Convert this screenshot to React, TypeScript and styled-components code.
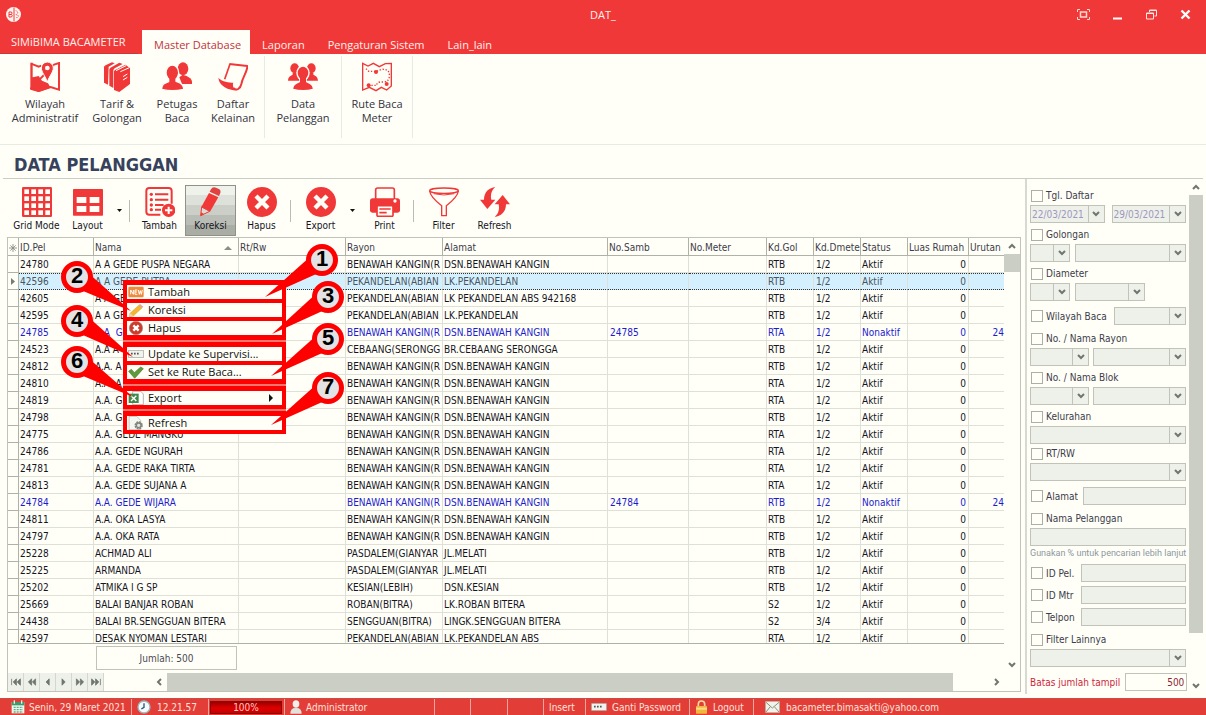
import React from "react";
import styled, { createGlobalStyle, css } from "styled-components";

const RED = "#f13838";
const PAPER = "#fffff8";
const FIELD = "#eef1ea";
const LINE = "#bfc3b8";
const TAHOMA = '"DejaVu Sans Condensed", "DejaVu Sans", sans-serif';
const SEGOE = '"Open Sans", "Noto Sans", sans-serif';

const GlobalStyle = createGlobalStyle`
  * { box-sizing: border-box; }
  body { margin: 0; background: ${PAPER}; font-family: ${TAHOMA}; font-size: 10px; color: #15151f; }
  button, input, select { font: inherit; color: inherit; }
  button { border: 0; padding: 0; background: none; cursor: pointer; }
  svg { display: block; flex: none; }
`;

const Window = styled.div`
  display: flex;
  flex-direction: column;
  height: 100vh;
  overflow: hidden;
`;

/* ---------- title bar and tabs ---------- */

const Header = styled.header`
  background: ${RED};
  color: #fff1ec;
  font-family: ${SEGOE};
  font-size: 11px;
`;

const TitleBar = styled.div`
  display: grid;
  grid-template-columns: 1fr auto 1fr;
  align-items: center;
  height: 30px;
  padding: 0 14px 2px 6px;
`;

const WindowButtons = styled.div`
  display: flex;
  justify-content: flex-end;
  gap: 21px;
`;

const TitleText = styled.span`
  padding-left: 8px;
`;

const Tabs = styled.nav`
  display: flex;
  align-items: stretch;
  height: 24px;
`;

const Brand = styled.button`
  width: 138px;
  margin-right: 4px;
  padding-left: 11px;
  text-align: left;
  border-bottom: 1px solid #c93a36;
`;

const Tab = styled.button<{ $active?: boolean }>`
  padding: 4px 9px 0 12px;
  margin-right: ${(p) => (p.$active ? 0 : 2)}px;
  ${(p) =>
    p.$active &&
    css`
      background: ${PAPER};
      color: #c0343c;
    `}
`;

/* ---------- ribbon ---------- */

const Ribbon = styled.div`
  display: flex;
  height: 91px;
  padding: 2px 8px 6px;
  border-bottom: 1px solid #e6ebe3;
  font-family: ${SEGOE};
  font-size: 11px;
  flex: none;
`;

const RibbonGroup = styled.div`
  display: flex;
  align-items: flex-start;
  border-right: 1px solid #e6ebe3;
`;

const RibbonButton = styled.button<{ $width: number }>`
  display: flex;
  flex-direction: column;
  align-items: center;
  gap: 5px;
  width: ${(p) => p.$width}px;
  padding-top: 6px;
  line-height: 14px;
  color: #33333f;
  white-space: pre-line;
`;

const PageTitle = styled.h1`
  flex: none;
  margin: 0 3px;
  padding: 9px 11px 0;
  height: 34px;
  border-bottom: 1px solid #c9cdc3;
  font-size: 18px;
  line-height: 22px;
  color: #36425c;
`;

/* ---------- main area ---------- */

const Main = styled.main`
  flex: 1;
  min-height: 0;
  display: flex;
`;

const Work = styled.section`
  flex: 1;
  min-width: 0;
  display: flex;
  flex-direction: column;
  padding: 0 4px 6px 7px;
`;

const Toolbar = styled.div`
  display: flex;
  align-items: flex-start;
  padding: 6px 0 1px 4px;
  flex: none;
`;

const Tool = styled.button<{ $on?: boolean }>`
  display: flex;
  flex-direction: column;
  align-items: center;
  gap: 3px;
  width: 51px;
  height: 51px;
  padding-top: 2px;
  line-height: 12px;
  white-space: nowrap;
  ${(p) =>
    p.$on &&
    css`
      background: linear-gradient(#eff1eb 0 19%, #dee1da 19% 39%, #cbcfc7 39% 59%, #b9bdb5 59% 79%, #a9ada4 79%);
      box-shadow: inset 0 0 0 1px #8e938a;
    `}
`;

const ToolDrop = styled.button`
  width: 13px;
  height: 51px;
  display: grid;
  place-items: center;
`;

const ToolRule = styled.span`
  width: 1px;
  height: 22px;
  margin: 15px 4px 0 3px;
  background: #b9beb3;
`;

const Grid = styled.div`
  position: relative;
  flex: 1;
  min-height: 0;
  display: flex;
  flex-direction: column;
  border: 1px solid ${LINE};
`;

const GridTop = styled.div`
  flex: 1;
  min-height: 0;
  display: flex;
`;

const GridView = styled.div`
  flex: 1;
  min-width: 0;
  display: flex;
  flex-direction: column;
`;

const TableClip = styled.div`
  flex: 1;
  min-height: 0;
  overflow: hidden;
  border-bottom: 1px solid #aeb3a8;
`;

const Table = styled.table`
  table-layout: fixed;
  width: 100%;
  border-collapse: separate;
  border-spacing: 0;
`;

const Th = styled.th`
  height: 18px;
  padding: 2px 1px 0;
  border-right: 1px solid #aeb3a8;
  border-bottom: 1px solid #aeb3a8;
  font-weight: 400;
  line-height: 15px;
  text-align: left;
  white-space: nowrap;
  overflow: hidden;
  color: #3c3c4a;
  &:last-child { border-right: 0; }
`;

const HeadFlex = styled.span`
  display: flex;
  justify-content: space-between;
  align-items: center;
  padding-right: 5px;
`;

const Td = styled.td<{ $align?: "right"; $pad?: number }>`
  height: 17px;
  padding: 2px 2px 0 ${(p) => p.$pad ?? 1}px;
  border-right: 1px solid #dde1d8;
  border-bottom: 1px solid #dde1d8;
  line-height: 14px;
  text-align: ${(p) => p.$align ?? "left"};
  white-space: pre;
  overflow: hidden;
  &:first-child { padding: 0 0 0 3px; border-color: #aeb3a8; background: ${PAPER}; }
  &:nth-child(5) { padding-right: 0; }
  &:last-child { border-right: 0; padding-right: 0; }
`;

const Tr = styled.tr<{ $tone?: "selected" | "inactive" }>`
  ${(p) => p.$tone === "inactive" && css`color: #1c1ccf;`}
  ${(p) =>
    p.$tone === "selected" &&
    css`
      color: #4a545c;
      background: #d4f0fe;
      ${Td}:not(:first-child) {
        padding-top: 1px;
        border-top: 1px dotted #333;
        border-bottom: 1px dotted #333;
      }
    `}
`;

const Footer = styled.div`
  height: 29px;
  padding: 2px 0 3px 88px;
`;

const Sum = styled.div`
  width: 141px;
  height: 24px;
  border: 1px solid ${LINE};
  line-height: 23px;
  text-align: center;
  color: #4a4a55;
`;

const VScroll = styled.div`
  width: 16px;
  display: flex;
  flex-direction: column;
  align-items: center;
`;

const Arrow = styled.button`
  flex: none;
  width: 16px;
  height: 16px;
  display: grid;
  place-items: center;
`;

const Thumb = styled.div<{ $size: string }>`
  flex: 0 0 ${(p) => p.$size};
  align-self: stretch;
  background: #cacec5;
`;

const Spacer = styled.span`
  flex: 1;
`;

const Pager = styled.div`
  display: flex;
  align-items: center;
  height: 18px;
  flex: none;
`;

const PageButton = styled.button`
  width: 16px;
  height: 18px;
  display: grid;
  place-items: center;
  background: ${FIELD};
  border-right: 1px solid #d3d7cd;
`;

const HTrack = styled.div`
  flex: 1;
  display: flex;
  align-items: center;
  align-self: stretch;
  padding: 0 15px 0 47px;
`;

/* ---------- context menu and its numbered callouts ---------- */

const Menu = styled.div`
  position: absolute;
  left: 115px;
  top: 42px;
  width: 163px;
  display: flex;
  flex-direction: column;
  gap: 2px;
  background: #f4776f;
  font-family: ${SEGOE};
  font-size: 11px;
`;

const MenuGroup = styled.div<{ $thin?: boolean }>`
  display: flex;
  flex-direction: column;
  gap: 4px;
  background: #fe0000;
  padding: 5px 4px ${(p) => (p.$thin ? 4 : 5)}px;
`;

const MenuItem = styled.button`
  display: flex;
  align-items: center;
  gap: 4px;
  height: 14px;
  padding: 0 9px 0 1px;
  background: ${PAPER};
  color: #111;
  line-height: 14px;
  text-align: left;
`;

const Callouts = styled.svg`
  position: absolute;
  left: 52px;
  top: 2px;
  pointer-events: none;
`;

/* ---------- filter panel ---------- */

const Filters = styled.aside`
  width: 181px;
  flex: none;
  display: flex;
  margin-bottom: 4px;
  border-left: 2px solid #d6dad0;
`;

const FilterForm = styled.form`
  flex: 1;
  min-width: 0;
  padding: 7px 2px 0 3px;
  color: #3c3c4a;
`;

const FilterBlock = styled.div<{ $top?: number }>`
  margin-top: ${(p) => p.$top ?? 0}px;
`;

const FieldRow = styled.div<{ $gap?: number }>`
  display: flex;
  gap: ${(p) => p.$gap ?? 5}px;
  height: 18px;
  align-items: center;
`;

const CheckLabel = styled.label`
  display: flex;
  align-items: center;
  gap: 3px;
  height: 19px;
  padding-left: 1px;
  white-space: nowrap;
  overflow: hidden;
`;

const Check = styled.input.attrs({ type: "checkbox" })`
  appearance: none;
  flex: none;
  width: 12px;
  height: 12px;
  margin: 0;
  border: 1px solid #aab0a3;
  background: ${PAPER};
`;

const SelectBox = styled.span<{ $width?: number }>`
  position: relative;
  display: flex;
  height: 18px;
  ${(p) => (p.$width ? `width: ${p.$width}px; flex: none;` : "flex: 1; min-width: 0;")}
  border: 1px solid ${LINE};
  background: ${FIELD};
`;

const Select = styled.select`
  appearance: none;
  width: 100%;
  border: 0;
  padding: 0 0 0 1px;
  background: none;
  color: #a097bd;
  outline: 0;
`;

const SelectArrow = styled.span`
  position: absolute;
  right: 0;
  top: 0;
  bottom: 0;
  width: 16px;
  display: grid;
  place-items: center;
  border-left: 1px solid ${LINE};
  pointer-events: none;
`;

const TextBox = styled.input`
  flex: 1;
  min-width: 0;
  width: 100%;
  height: 18px;
  border: 1px solid ${LINE};
  background: ${FIELD};
`;

const Hint = styled.p`
  margin: 0;
  font-family: Roboto, sans-serif;
  font-size: 9px;
  line-height: 14px;
  color: #8c98a0;
  white-space: nowrap;
`;

const LimitLabel = styled.label`
  flex: 1;
  color: #cf1f3c;
  white-space: nowrap;
`;

const LimitBox = styled(TextBox)`
  flex: none;
  width: 62px;
  background: ${PAPER};
  color: #8c1f35;
  text-align: right;
`;

const FilterScroll = styled.div`
  width: 18px;
  padding: 0 3px 0 1px;
  display: flex;
  flex-direction: column;
  align-items: center;
`;

/* ---------- status bar ---------- */

const StatusBar = styled.footer`
  flex: none;
  display: flex;
  height: 17px;
  background: #e23e37;
  border-top: 1px solid #cf4a42;
  color: #ffe2dd;
`;

const StatusCell = styled.div<{ $width?: number; $pad?: number; $gap?: number }>`
  display: flex;
  align-items: center;
  gap: ${(p) => p.$gap ?? 4}px;
  ${(p) => (p.$width ? `width: ${p.$width}px; border-right: 1px solid #f0a59f;` : "flex: 1;")}
  padding-left: ${(p) => p.$pad ?? 5}px;
  white-space: nowrap;
`;

const StatusButton = styled.button`
  display: flex;
  align-items: center;
  gap: 5px;
`;

const StatusLink = styled.a`
  color: inherit;
  text-decoration: none;
`;

const Meter = styled.div`
  width: 72px;
  height: 13px;
  line-height: 13px;
  text-align: center;
  color: #ffc9c4;
  background: linear-gradient(#8d0000, #e00000 55%, #c00000);
  box-shadow: inset 0 0 0 1px #8a0a0a;
`;

/* ---------- icons ---------- */

const Ico = ({ children, size = 30, box = 90 }: { children: React.ReactNode; size?: number; box?: number }) => (
  <svg width={size} height={size} viewBox={`0 0 ${box} ${box}`} fill={RED} aria-hidden="true">
    {children}
  </svg>
);

const MapPinIcon = () => (
  <Ico>
    <path d="M3 5 26 14 34 11M72 8 87 3V83L62 75 26 87 3 79Z" fill="none" stroke={RED} strokeWidth="6" />
    <path d="M1 2V83L26 90 62 77 54 64 36 56 26 42 8 46V2Z" />
    <path d="M52 0a18 18 0 0 1 18 18c0 12-12 24-18 42-6-18-18-30-18-42A18 18 0 0 1 52 0z" stroke={PAPER} strokeWidth="3" />
    <circle cx="52" cy="18" r="7" fill={PAPER} />
  </Ico>
);

const BooksIcon = () => (
  <Ico>
    <path d="M6 14Q8 11 12 9L30 1 38 4 20 14 18 68 6 62Z" />
    <path d="M22 22Q24 18 28 16L52 2 62 6 38 19 34 24V78L22 71Z" />
    <path d="M36 28Q38 24 44 22L70 8 84 18V66L52 90 36 84Z" />
    <path d="M42 26 72 11M55 29 82 17M63 44 76 36M63 54 76 46" stroke={PAPER} strokeWidth="3" fill="none" />
  </Ico>
);

const TwoUsersIcon = () => (
  <Ico>
    <ellipse cx="63" cy="20" rx="16" ry="19" />
    <path d="M52 46 62 38 74 42C86 48 91 54 91 66H60Z" />
    <g stroke={PAPER} strokeWidth="4">
      <path d="M22 48V58L8 64C0 68-1 74-1 82Q30 90 65 82C65 72 62 68 54 63L40 57V48Z" />
      <ellipse cx="31" cy="32" rx="19" ry="23" />
    </g>
    <path d="M22 46H40V60H22Z" />
  </Ico>
);

const ScrollIcon = () => (
  <Ico>
    <path d="M34 6 88 12C88 30 74 44 70 66 67 80 56 88 46 78" fill="none" stroke={RED} strokeWidth="6" strokeLinejoin="round" />
    <path d="M36 6 20 52" stroke={RED} strokeWidth="5" />
    <path d="M1 48C14 60 32 62 46 62 42 72 48 82 58 85 34 86 4 74 1 48Z" />
  </Ico>
);

const ThreeUsersIcon = () => (
  <Ico>
    <ellipse cx="20" cy="19" rx="13" ry="15" />
    <ellipse cx="70" cy="19" rx="13" ry="15" />
    <path d="M0 56C1 44 6 42 14 38V32H27V40L36 56Z" />
    <path d="M90 56C89 44 84 42 76 38V32H63V40L54 56Z" />
    <g stroke={PAPER} strokeWidth="4">
      <path d="M36 50V58L24 64C16 68 14 74 14 82Q45 90 76 82C76 74 74 68 66 64L54 58V50Z" />
      <ellipse cx="45" cy="33" rx="18" ry="21" />
    </g>
    <path d="M36 46H54V62H36Z" />
  </Ico>
);

const RouteMapIcon = () => (
  <Ico>
    <path d="M2 4 18 12 34 4 52 14 70 5 88 4V72L74 84 58 76 42 86 22 76 2 84Z" fill="none" stroke={RED} strokeWidth="4" />
    <path d="M12 20 20 28H44L58 22Q84 20 82 42 82 58 66 60H54Q44 62 44 70H22" fill="none" stroke={RED} strokeWidth="4" strokeDasharray="4 5" />
    <circle cx="42" cy="30" r="6" />
    <circle cx="20" cy="70" r="6" />
    <circle cx="74" cy="66" r="6" />
  </Ico>
);

const GridIcon = () => (
  <Ico>
    <rect width="90" height="90" rx="4" />
    {[7, 28, 49, 70].map((y) => [7, 28, 49, 70].map((x) => <rect key={`${x}-${y}`} x={x} y={y} width="14" height="14" fill={PAPER} />))}
  </Ico>
);

const LayoutIcon = () => (
  <Ico>
    <rect y="6" width="90" height="80" rx="2" />
    <path d="M11 30H40V48H11ZM50 30H79V48H50ZM11 57H40V75H11ZM50 57H79V75H50Z" fill={PAPER} />
  </Ico>
);

const AddListIcon = () => (
  <Ico>
    <path d="M80 50V12Q80 3 71 3H13Q4 3 4 12V74Q4 83 13 83H46" fill="none" stroke={RED} strokeWidth="6" />
    <path d="M30 22H70M30 38H70M30 54H56M30 68H48" stroke={RED} strokeWidth="6" />
    <circle cx="19" cy="22" r="5" />
    <circle cx="19" cy="38" r="5" />
    <circle cx="19" cy="54" r="5" />
    <circle cx="19" cy="68" r="5" />
    <circle cx="71" cy="70" r="20" />
    <path d="M71 59V81M60 70H82" stroke={PAPER} strokeWidth="6" />
  </Ico>
);

const PencilIcon = () => (
  <Ico>
    <path d="M44 8Q50-2 60 2L70 7Q76 12 72 20L69 27 41 14Z" fill="#e0433f" />
    <path d="M39 18 67 31 42 74 16 60Z" />
    <path d="M17 60 14 86 41 73Z" fill="#d9ddd5" stroke={RED} strokeWidth="3" />
    <path d="M14 88 15 76 24 81Z" />
  </Ico>
);

const CrossIcon = () => (
  <Ico>
    <circle cx="45" cy="45" r="45" />
    <path d="M27 27 63 63M63 27 27 63" stroke={PAPER} strokeWidth="13" />
  </Ico>
);

const PrinterIcon = () => (
  <Ico>
    <path d="M17 36V9Q17 3 23 3H67Q73 3 73 9V36" fill="none" stroke={RED} strokeWidth="5" />
    <path d="M8 34H82Q90 34 90 42V70Q90 77 83 77H7Q0 77 0 70V42Q0 34 8 34Z" />
    <rect x="21" y="56" width="48" height="32" rx="3" fill={PAPER} stroke={RED} strokeWidth="5" />
    <path d="M28 66H62M28 77H50" stroke={RED} strokeWidth="5" />
    <circle cx="75" cy="42" r="5" fill={PAPER} />
  </Ico>
);

const FunnelIcon = () => (
  <Ico>
    <path d="M2 12Q4 30 38 56V86H52V56Q86 30 88 12" fill="none" stroke={RED} strokeWidth="4" strokeLinejoin="round" />
    <ellipse cx="45" cy="11" rx="43" ry="8" fill={PAPER} stroke={RED} strokeWidth="4" />
    <path d="M14 20Q44 28 76 20" fill="none" stroke={RED} strokeWidth="3" />
  </Ico>
);

const RefreshIcon = () => (
  <Ico>
    <path d="M46 0C28 2 12 14 12 38H0L22 66 46 38H34C31 24 34 10 46 0Z" />
    <path d="M44 90C62 88 78 76 78 52H90L68 24 44 52H56C59 66 56 80 44 90Z" />
  </Ico>
);

const Caret = () => (
  <svg width="5" height="3" viewBox="0 0 5 3" aria-hidden="true">
    <path d="M0 0H5L2.500 3Z" fill="#111" />
  </svg>
);

const Chevron = ({ dir }: { dir: "up" | "down" | "left" | "right" }) => {
  const d = { up: "M1 6 4 3 7 6", down: "M1 2 4 5 7 2", left: "M6 1 3 4 6 7", right: "M2 1 5 4 2 7" }[dir];
  return (
    <svg width="8" height="8" viewBox="0 0 8 8" fill="none" stroke="#70776c" strokeWidth="2" aria-hidden="true">
      <path d={d} />
    </svg>
  );
};

const LogoIcon = () => (
  <svg width="15" height="15" viewBox="0 0 30 30" aria-hidden="true">
    <circle cx="15" cy="15" r="15" fill="#fff3ef" />
    <path d="M16 1V29" stroke={RED} strokeWidth="2" />
    <path d="M6 10H11Q13 12 11 15 14 17 11 20H6ZM6 15H11" fill="none" stroke={RED} strokeWidth="2" />
    <path d="M20 7 24 11 20 15 25 18 20 23" fill="none" stroke={RED} strokeWidth="2" strokeDasharray="3 2" />
  </svg>
);

const NewIcon = () => (
  <svg width="16" height="12" viewBox="0 0 48 36" aria-hidden="true">
    <rect x="1" y="2" width="46" height="32" rx="4" fill="#ee8a3c" />
    <path d="M8 25V12L16 25V12M28 12H21V25H28M21 18H27M31 12 34 25 37 14 40 25 43 12" fill="none" stroke="#fff" strokeWidth="3" />
  </svg>
);
const EditIcon = () => (
  <svg width="16" height="13" viewBox="0 0 48 39" aria-hidden="true">
    <path d="M6 28 32 4 42 12 16 36 4 38Z" fill="#f2b632" stroke="#c98d1e" strokeWidth="1" />
    <path d="M32 4 36 0 46 8 42 12Z" fill="#d9a29a" />
    <path d="M6 28 16 36 4 38Z" fill="#ead9bd" />
  </svg>
);
const DeleteIcon = () => (
  <svg width="16" height="14" viewBox="0 0 48 42" aria-hidden="true">
    <circle cx="24" cy="21" r="20" fill="#cf3a2a" stroke="#8f8f8a" strokeWidth="2" />
    <path d="M16 13 32 29M32 13 16 29" stroke="#fff" strokeWidth="7" />
  </svg>
);
const PasswordIcon = () => (
  <svg width="16" height="8" viewBox="0 0 48 24" aria-hidden="true">
    <rect x="1" y="1" width="46" height="22" rx="2" fill="#f1f3ee" stroke="#8e948a" strokeWidth="2" />
    <path d="M9 11H36" stroke="#555" strokeWidth="5" strokeDasharray="5 4" />
  </svg>
);
const TickIcon = () => (
  <svg width="16" height="13" viewBox="0 0 48 39" aria-hidden="true">
    <path d="M2 16 10 10 19 20 38 3 46 8 20 37Z" fill="#5f9b3c" stroke="#477a2b" strokeWidth="2" />
  </svg>
);
const ExcelIcon = () => (
  <svg width="16" height="14" viewBox="0 0 48 42" aria-hidden="true">
    <path d="M14 1H38L46 9V41H14Z" fill="#fff" stroke="#8e948a" strokeWidth="2" />
    <rect x="2" y="8" width="30" height="28" fill="#3f8a48" />
    <path d="M9 14 25 30M25 14 9 30" stroke="#fff" strokeWidth="4" />
  </svg>
);
const PageGearIcon = () => (
  <svg width="16" height="14" viewBox="0 0 48 42" aria-hidden="true">
    <path d="M3 1H26L38 13V41H3Z" fill="#f5f6f2" stroke="#a9aea4" strokeWidth="2" />
    <circle cx="32" cy="28" r="9" fill="#f5f6f2" stroke="#7f857b" strokeWidth="7" strokeDasharray="5 2" />
    <circle cx="32" cy="28" r="7" fill="#e4e7e0" stroke="#7f857b" strokeWidth="4" />
  </svg>
);
const CalendarIcon = () => (
  <svg width="14" height="14" viewBox="0 0 42 42" aria-hidden="true">
    <rect x="2" y="6" width="38" height="34" fill="#eef5ec" />
    <rect x="2" y="6" width="38" height="10" fill="#3e9a6c" />
    <path d="M10 1V11M32 1V11" stroke="#f6e9e5" strokeWidth="4" />
    <path d="M8 22H36M8 29H36M8 36H36" stroke="#5fb08a" strokeWidth="4" strokeDasharray="6 3" />
  </svg>
);
const ClockIcon = () => (
  <svg width="14" height="14" viewBox="0 0 42 42" aria-hidden="true">
    <circle cx="21" cy="21" r="18" fill="#f4fbff" stroke="#9db6bf" strokeWidth="4" />
    <path d="M21 10V22L13 27" fill="none" stroke="#31536b" strokeWidth="4" />
  </svg>
);
const UserIcon = () => (
  <svg width="12" height="14" viewBox="0 0 36 42" aria-hidden="true">
    <ellipse cx="18" cy="12" rx="10" ry="11" fill="#f5efea" />
    <path d="M1 41Q1 23 18 24 35 23 35 41Z" fill="#dfe3dc" />
  </svg>
);
const LockIcon = () => (
  <svg width="13" height="14" viewBox="0 0 39 42" aria-hidden="true">
    <path d="M10 20V12Q10 3 19 3 29 3 29 12V20" fill="none" stroke="#f4d9a2" strokeWidth="5" />
    <rect x="3" y="18" width="33" height="23" rx="2" fill="#f1b63c" />
    <path d="M3 26H36" stroke="#fbdc8c" strokeWidth="6" />
  </svg>
);
const MailIcon = () => (
  <svg width="15" height="12" viewBox="0 0 45 36" aria-hidden="true">
    <rect x="1" y="1" width="43" height="34" rx="2" fill="#f1f3ea" stroke="#9aa08f" strokeWidth="2" />
    <path d="M3 4 22 21 42 4M3 33 16 17M42 33 28 17" fill="none" stroke="#8a927f" strokeWidth="3" />
  </svg>
);

/* ---------- data ---------- */

type Row = [id: string, nama: string, rayon: string, alamat: string, gol: string, dm?: string, samb?: string];

const BK = "BENAWAH KANGIN(R";
const DBK = "DSN.BENAWAH KANGIN";

const rows: Row[] = [
  ["24780", "A A GEDE PUSPA NEGARA", BK, DBK, "RTB"],
  ["42596", "A A GEDE PUTRA", "PEKANDELAN(ABIAN", "LK.PEKANDELAN", "RTB"],
  ["42605", "A A GEDE", "PEKANDELAN(ABIAN", "LK PEKANDELAN ABS 942168", "RTB"],
  ["42595", "A A GEDE", "PEKANDELAN(ABIAN", "LK.PEKANDELAN", "RTB"],
  ["24785", "A.A  G", BK, DBK, "RTA", "1/2", "24785"],
  ["24523", "A.A A", "CEBAANG(SERONGG", "BR.CEBAANG SERONGGA", "RTB"],
  ["24812", "A.A. A", BK, DBK, "RTB"],
  ["24810", "A.A. A", BK, DBK, "RTA"],
  ["24819", "A.A. G", BK, DBK, "RTA"],
  ["24798", "A.A. G", BK, DBK, "RTB"],
  ["24775", "A.A. GEDE MANGKU", BK, DBK, "RTA"],
  ["24786", "A.A. GEDE NGURAH", BK, DBK, "RTA"],
  ["24781", "A.A. GEDE RAKA TIRTA", BK, DBK, "RTA"],
  ["24813", "A.A. GEDE SUJANA A", BK, DBK, "RTA"],
  ["24784", "A.A. GEDE WIJARA", BK, DBK, "RTB", "1/2", "24784"],
  ["24811", "A.A. OKA LASYA", BK, DBK, "RTB"],
  ["24797", "A.A. OKA RATA", BK, DBK, "RTB"],
  ["25228", "ACHMAD ALI", "PASDALEM(GIANYAR", "JL.MELATI", "RTB"],
  ["25225", "ARMANDA", "PASDALEM(GIANYAR", "JL.MELATI", "RTB"],
  ["25202", "ATMIKA I G SP", "KESIAN(LEBIH)", "DSN.KESIAN", "RTB"],
  ["25669", "BALAI BANJAR ROBAN", "ROBAN(BITRA)", "LK.ROBAN BITERA", "S2"],
  ["24438", "BALAI BR.SENGGUAN BITERA", "SENGGUAN(BITRA)", "LINGK.SENGGUAN BITERA", "S2", "3/4"],
  ["42597", "DESAK NYOMAN LESTARI", "PEKANDELAN(ABIAN", "LK.PEKANDELAN ABS", "RTA"],
];

const columns: [label: string, width?: number][] = [
  ["ID.Pel", 75],
  ["Nama", 145],
  ["Rt/Rw", 107],
  ["Rayon", 97],
  ["Alamat", 165],
  ["No.Samb", 81],
  ["No.Meter", 78],
  ["Kd.Gol", 47],
  ["Kd.Dmete", 47],
  ["Status", 47],
  ["Luas Rumah", 61],
  ["Urutan"],
];

const callouts = [
  { n: 1, x: 322, y: 260, tx: 265, ty: 297 },
  { n: 2, x: 77, y: 277, tx: 131, ty: 311 },
  { n: 3, x: 328, y: 297, tx: 272, ty: 334 },
  { n: 4, x: 77, y: 321, tx: 133, ty: 357 },
  { n: 5, x: 328, y: 339, tx: 271, ty: 376 },
  { n: 6, x: 77, y: 362, tx: 133, ty: 397 },
  { n: 7, x: 328, y: 388, tx: 271, ty: 425 },
];

const tail = (c: (typeof callouts)[number]) => {
  const len = Math.hypot(c.tx - c.x, c.ty - c.y);
  const nx = (-(c.ty - c.y) / len) * 9;
  const ny = ((c.tx - c.x) / len) * 9;
  const bx = c.x + ((c.tx - c.x) / len) * 10;
  const by = c.y + ((c.ty - c.y) / len) * 10;
  return `${bx + nx},${by + ny} ${c.tx},${c.ty} ${bx - nx},${by - ny}`;
};

const Combo = ({ label, width, value }: { label: string; width?: number; value?: string }) => (
  <SelectBox $width={width}>
    <Select aria-label={label} defaultValue={value ?? ""}>
      <option>{value ?? ""}</option>
    </Select>
    <SelectArrow>
      <Chevron dir="down" />
    </SelectArrow>
  </SelectBox>
);

const Toggle = ({ children }: { children: React.ReactNode }) => (
  <CheckLabel>
    <Check />
    {children}
  </CheckLabel>
);

const InlineToggle = styled(CheckLabel)<{ $width: number }>`
  flex: none;
  width: ${(p) => p.$width}px;
`;

const pagerShapes = [
  "M2 1V9M8 1 4 5 8 9ZM13 1 9 5 13 9Z",
  "M7 1 3 5 7 9ZM12 1 8 5 12 9Z",
  "M9 1 5 5 9 9Z",
  "M5 1 9 5 5 9Z",
  "M3 1 7 5 3 9ZM8 1 12 5 8 9Z",
  "M2 1 6 5 2 9ZM7 1 11 5 7 9ZM13 1V9",
];
const pagerNames = ["First", "Previous page", "Previous", "Next", "Next page", "Last"];

export default function App() {
  return (
    <Window>
      <GlobalStyle />
      <Header>
        <TitleBar>
          <LogoIcon />
          <TitleText>DAT_</TitleText>
          <WindowButtons>
            <button aria-label="Full screen">
              <svg width="13" height="11" viewBox="0 0 13 11" fill="none" stroke="#ffd8d2" strokeWidth="1">
                <path d="M.5 3V.5H3M10 .5H12.500V3M12.500 8V10.500H10M3 10.500H.5V8" />
                <rect x="3.500" y="3" width="6" height="5" strokeWidth="1.500" />
              </svg>
            </button>
            <button aria-label="Minimize">
              <svg width="13" height="11" viewBox="0 0 13 11">
                <path d="M2 9.500H11" stroke="#fff" strokeWidth="2" />
              </svg>
            </button>
            <button aria-label="Restore">
              <svg width="13" height="11" viewBox="0 0 13 11" fill="none" stroke="#ffe6e1" strokeWidth="1">
                <path d="M4.500 3V1H11.500V7H9.500M4 1.500H12" />
                <path d="M1.500 4H8.500V10H1.500ZM1 4.500H9" />
              </svg>
            </button>
            <button aria-label="Close">
              <svg width="13" height="11" viewBox="0 0 13 11">
                <path d="M2.500 1.500 10.500 9.500M10.500 1.500 2.500 9.500" stroke="#fff" strokeWidth="2.400" />
              </svg>
            </button>
          </WindowButtons>
        </TitleBar>
        <Tabs>
          <Brand>SIMiBIMA BACAMETER</Brand>
          <Tab $active>Master Database</Tab>
          <Tab>Laporan</Tab>
          <Tab>Pengaturan Sistem</Tab>
          <Tab>Lain_lain</Tab>
        </Tabs>
      </Header>

      <Ribbon>
        <RibbonGroup>
          <RibbonButton $width={74}><MapPinIcon />{"Wilayah\nAdministratif"}</RibbonButton>
          <RibbonButton $width={70}><BooksIcon />{"Tarif &\nGolongan"}</RibbonButton>
          <RibbonButton $width={50}><TwoUsersIcon />{"Petugas\nBaca"}</RibbonButton>
          <RibbonButton $width={62}><ScrollIcon />{"Daftar\nKelainan"}</RibbonButton>
        </RibbonGroup>
        <RibbonGroup>
          <RibbonButton $width={76}><ThreeUsersIcon />{"Data\nPelanggan"}</RibbonButton>
        </RibbonGroup>
        <RibbonGroup>
          <RibbonButton $width={70}><RouteMapIcon />{"Rute Baca\nMeter"}</RibbonButton>
        </RibbonGroup>
      </Ribbon>

      <PageTitle>DATA PELANGGAN</PageTitle>

      <Main>
        <Work>
          <Toolbar>
            <Tool><GridIcon />Grid Mode</Tool>
            <Tool><LayoutIcon />Layout</Tool>
            <ToolDrop aria-label="Layout options"><Caret /></ToolDrop>
            <ToolRule />
            <Tool><AddListIcon />Tambah</Tool>
            <Tool $on><PencilIcon />Koreksi</Tool>
            <Tool><CrossIcon />Hapus</Tool>
            <ToolRule />
            <Tool><CrossIcon />Export</Tool>
            <ToolDrop aria-label="Export options"><Caret /></ToolDrop>
            <Tool><PrinterIcon />Print</Tool>
            <ToolRule />
            <Tool><FunnelIcon />Filter</Tool>
            <Tool><RefreshIcon />Refresh</Tool>
          </Toolbar>

          <Grid>
            <GridTop>
              <GridView>
                <TableClip>
                  <Table>
                    <colgroup>
                      <col width={11} />
                      {columns.map(([label, width]) => <col key={label} width={width} />)}
                    </colgroup>
                    <thead>
                      <tr>
                        <Th aria-label="Row marker">
                          <svg width="8" height="8" viewBox="0 0 9 9" stroke="#8a8f86" strokeWidth="1">
                            <path d="M4.500 0V9M0 4.500H9M1.500 1.500 7.500 7.500M7.500 1.500 1.500 7.500" />
                          </svg>
                        </Th>
                        {columns.map(([label]) => (
                          <Th key={label}>
                            {label === "Nama" ? (
                              <HeadFlex>
                                Nama
                                <svg width="8" height="4" viewBox="0 0 8 4"><path d="M0 4 4 0 8 4Z" fill="#8a8f86" /></svg>
                              </HeadFlex>
                            ) : (
                              label
                            )}
                          </Th>
                        ))}
                      </tr>
                    </thead>
                    <tbody>
                      {rows.map(([id, nama, rayon, alamat, gol, dm, samb], i) => (
                        <Tr key={id} $tone={i === 1 ? "selected" : samb ? "inactive" : undefined}>
                          <Td>
                            {i === 1 && (
                              <svg width="4" height="7" viewBox="0 0 4 7"><path d="M0 0 4 3.500 0 7Z" fill="#777d73" /></svg>
                            )}
                          </Td>
                          <Td>{id}</Td>
                          <Td>{nama}</Td>
                          <Td />
                          <Td>{rayon}</Td>
                          <Td>{alamat}</Td>
                          <Td $pad={2}>{samb}</Td>
                          <Td />
                          <Td>{gol}</Td>
                          <Td $pad={2}>{dm ?? "1/2"}</Td>
                          <Td>{samb ? "Nonaktif" : "Aktif"}</Td>
                          <Td $align="right">0</Td>
                          <Td $align="right">{samb && "24"}</Td>
                        </Tr>
                      ))}
                    </tbody>
                  </Table>
                </TableClip>
                <Footer>
                  <Sum>Jumlah: 500</Sum>
                </Footer>
              </GridView>
              <VScroll>
                <Arrow aria-label="Scroll up"><Chevron dir="up" /></Arrow>
                <Thumb $size="18px" />
                <Spacer />
                <Arrow aria-label="Scroll down"><Chevron dir="down" /></Arrow>
              </VScroll>
            </GridTop>
            <Pager>
              {pagerShapes.map((d, i) => (
                <PageButton key={d} aria-label={pagerNames[i]}>
                  <svg width="12" height="8" viewBox="0 0 15 10" fill="#70776c" stroke="#70776c" strokeWidth="1">
                    <path d={d} />
                  </svg>
                </PageButton>
              ))}
              <HTrack>
                <Arrow aria-label="Scroll left"><Chevron dir="left" /></Arrow>
                <Thumb $size="92%" />
                <Spacer />
                <Arrow aria-label="Scroll right"><Chevron dir="right" /></Arrow>
              </HTrack>
            </Pager>

            <Menu role="menu">
              <MenuGroup>
                <MenuItem role="menuitem"><NewIcon />Tambah</MenuItem>
                <MenuItem role="menuitem"><EditIcon />Koreksi</MenuItem>
                <MenuItem role="menuitem"><DeleteIcon />Hapus</MenuItem>
              </MenuGroup>
              <MenuGroup>
                <MenuItem role="menuitem"><PasswordIcon />Update ke Supervisi...</MenuItem>
                <MenuItem role="menuitem"><TickIcon />Set ke Rute Baca...</MenuItem>
              </MenuGroup>
              <MenuGroup $thin>
                <MenuItem role="menuitem">
                  <ExcelIcon />
                  Export
                  <Spacer />
                  <svg width="4" height="8" viewBox="0 0 4 8"><path d="M0 0 4 4 0 8Z" fill="#111" /></svg>
                </MenuItem>
              </MenuGroup>
              <MenuGroup $thin>
                <MenuItem role="menuitem"><PageGearIcon />Refresh</MenuItem>
              </MenuGroup>
            </Menu>
            <Callouts width="290" height="200" viewBox="60 240 290 200">
              {callouts.map((c) => (
                <g key={c.n}>
                  <polygon points={tail(c)} fill="#fe0000" />
                  <circle cx={c.x} cy={c.y} r="13.500" fill="#e3e3e5" stroke="#fe0000" strokeWidth="5" />
                  <text x={c.x} y={c.y + 6} textAnchor="middle" fontFamily="'Liberation Sans', sans-serif" fontWeight="700" fontSize="22" fill="#000">
                    {c.n}
                  </text>
                </g>
              ))}
            </Callouts>
          </Grid>
        </Work>

        <Filters>
          <FilterForm>
            <FilterBlock>
              <Toggle>Tgl. Daftar</Toggle>
              <FieldRow $gap={7}>
                <Combo label="Tanggal awal" value="22/03/2021" />
                <Combo label="Tanggal akhir" value="29/03/2021" />
              </FieldRow>
            </FilterBlock>
            <FilterBlock $top={2}>
              <Toggle>Golongan</Toggle>
              <FieldRow>
                <Combo label="Kode golongan" width={40} />
                <Combo label="Nama golongan" />
              </FieldRow>
            </FilterBlock>
            <FilterBlock $top={2}>
              <Toggle>Diameter</Toggle>
              <FieldRow>
                <Combo label="Kode diameter" width={40} />
                <Combo label="Nama diameter" width={70} />
              </FieldRow>
            </FilterBlock>
            <FilterBlock $top={6}>
              <FieldRow>
                <InlineToggle $width={79}><Check />Wilayah Baca</InlineToggle>
                <Combo label="Wilayah" />
              </FieldRow>
            </FilterBlock>
            <FilterBlock $top={4}>
              <Toggle>No. / Nama Rayon</Toggle>
              <FieldRow $gap={4}>
                <Combo label="Nomor rayon" width={59} />
                <Combo label="Nama rayon" />
              </FieldRow>
            </FilterBlock>
            <FilterBlock $top={2}>
              <Toggle>No. / Nama Blok</Toggle>
              <FieldRow $gap={4}>
                <Combo label="Nomor blok" width={59} />
                <Combo label="Nama blok" />
              </FieldRow>
            </FilterBlock>
            <FilterBlock $top={2}>
              <Toggle>Kelurahan</Toggle>
              <FieldRow><Combo label="Nama kelurahan" /></FieldRow>
            </FilterBlock>
            <FilterBlock>
              <Toggle>RT/RW</Toggle>
              <FieldRow><Combo label="Nomor RT/RW" /></FieldRow>
            </FilterBlock>
            <FilterBlock $top={6}>
              <FieldRow>
                <InlineToggle $width={48}><Check />Alamat</InlineToggle>
                <TextBox aria-label="Isi alamat" />
              </FieldRow>
            </FilterBlock>
            <FilterBlock $top={4}>
              <Toggle>Nama Pelanggan</Toggle>
              <FieldRow><TextBox aria-label="Isi nama pelanggan" /></FieldRow>
              <Hint>Gunakan % untuk pencarian lebih lanjut</Hint>
            </FilterBlock>
            <FilterBlock $top={4}>
              <FieldRow>
                <InlineToggle $width={46}><Check />ID Pel.</InlineToggle>
                <TextBox aria-label="Isi ID pelanggan" />
              </FieldRow>
            </FilterBlock>
            <FilterBlock $top={4}>
              <FieldRow>
                <InlineToggle $width={46}><Check />ID Mtr</InlineToggle>
                <TextBox aria-label="Isi ID meter" />
              </FieldRow>
            </FilterBlock>
            <FilterBlock $top={4}>
              <FieldRow>
                <InlineToggle $width={46}><Check />Telpon</InlineToggle>
                <TextBox aria-label="Isi telpon" />
              </FieldRow>
            </FilterBlock>
            <FilterBlock $top={4}>
              <Toggle>Filter Lainnya</Toggle>
              <FieldRow><Combo label="Pilihan filter" /></FieldRow>
            </FilterBlock>
            <FilterBlock $top={6}>
              <FieldRow>
                <LimitLabel htmlFor="limit">Batas jumlah tampil</LimitLabel>
                <LimitBox id="limit" defaultValue="500" />
              </FieldRow>
            </FilterBlock>
          </FilterForm>
          <FilterScroll>
            <Arrow aria-label="Scroll filters up"><Chevron dir="up" /></Arrow>
            <Thumb $size="85%" />
            <Spacer />
            <Arrow aria-label="Scroll filters down"><Chevron dir="down" /></Arrow>
          </FilterScroll>
        </Filters>
      </Main>

      <StatusBar>
        <StatusCell $width={132} $pad={11}><CalendarIcon />Senin, 29 Maret 2021</StatusCell>
        <StatusCell $width={77} $gap={6}><ClockIcon />12.21.57</StatusCell>
        <StatusCell $width={76} $pad={1}><Meter>100%</Meter></StatusCell>
        <StatusCell $width={150}><UserIcon />Administrator</StatusCell>
        <StatusCell $width={36} />
        <StatusCell $width={37} />
        <StatusCell $width={36} />
        <StatusCell $width={42}>Insert</StatusCell>
        <StatusCell $width={104}><StatusButton><PasswordIcon />Ganti Password</StatusButton></StatusCell>
        <StatusCell $width={64}><StatusButton><LockIcon />Logout</StatusButton></StatusCell>
        <StatusCell $pad={11} $gap={6}>
          <MailIcon />
          <StatusLink href="mailto:bacameter.bimasakti@yahoo.com">bacameter.bimasakti@yahoo.com</StatusLink>
        </StatusCell>
      </StatusBar>
    </Window>
  );
}
